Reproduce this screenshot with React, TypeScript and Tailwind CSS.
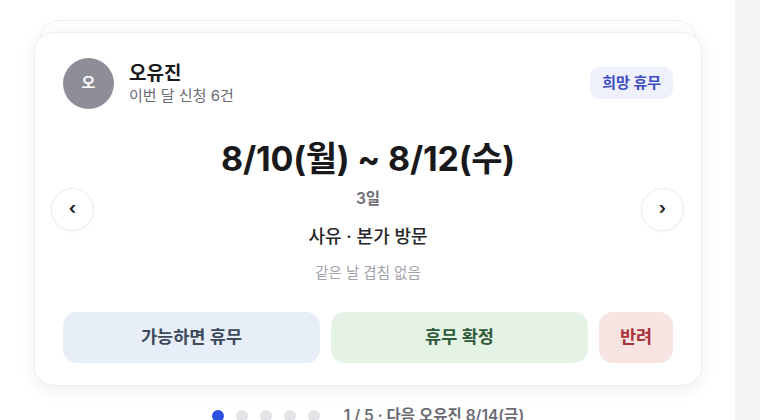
import React from "react";

const font = { fontFamily: 'Inter, "Noto Sans CJK KR", "Noto Sans", sans-serif' };

function NavButton({ side }: { side: "left" | "right" }) {
  return (
    <button
      className={`absolute top-[155px] flex h-[43px] w-[43px] items-center justify-center rounded-full border border-[#ececef] bg-white text-[17px] font-bold leading-none text-[#222] shadow-[0_1px_3px_rgba(0,0,0,0.04)] ${
        side === "left" ? "left-[16px]" : "right-[17px]"
      }`}
    >
      <span className="-mt-[2px]">{side === "left" ? "‹" : "›"}</span>
    </button>
  );
}

export default function App() {
  const dots = [0, 1, 2, 3, 4];
  return (
    <div className="flex h-[420px] w-[760px] overflow-hidden bg-white" style={font}>
      <div className="flex w-[735px] flex-col pl-[34px] pr-[33px] pt-[32px]">
        <div className="relative">
          {/* card stacked behind the current one */}
          <div className="absolute inset-x-[6px] -top-[12px] h-[60px] rounded-[20px] border border-[#f0f0f2] bg-white shadow-[0_2px_10px_rgba(0,0,0,0.03)]" />
          <div className="relative flex h-[354px] flex-col rounded-[20px] border border-[#efeff1] bg-white px-[28px] pb-[24px] pt-[25px] shadow-[0_4px_18px_rgba(0,0,0,0.07)]">
            <div className="flex items-center justify-between">
              <div className="flex items-center gap-[15px]">
                <div className="flex h-[51px] w-[51px] items-center justify-center rounded-full bg-[#8e8e99] text-[15px] font-bold text-white">
                  오
                </div>
                <div className="flex flex-col">
                  <span className="text-[19px] font-bold leading-[24px] text-[#1a1a1c]">오유진</span>
                  <span className="text-[15px] leading-[20px] text-[#6b6b73]">이번 달 신청 6건</span>
                </div>
              </div>
              <span className="-mt-[2px] rounded-[10px] bg-[#eef0fb] px-[12px] py-[6px] text-[15px] font-bold leading-[20px] text-[#3a4cc4]">
                희망 휴무
              </span>
            </div>

            <div className="mt-[30px] text-center text-[34px] font-bold leading-[40px] tracking-[-0.2px] text-[#19191b]">
              8/10(월) ~ 8/12(수)
            </div>
            <div className="mt-[9px] text-center text-[15.5px] font-semibold leading-[22px] text-[#6e6e76]">3일</div>
            <div className="mt-[14px] text-center text-[18px] font-medium leading-[26px] text-[#26262a]">
              사유 · 본가 방문
            </div>
            <div className="mt-[13px] text-center text-[14.5px] leading-[20px] text-[#a2a2aa]">같은 날 겹침 없음</div>

            <div className="mt-[29px] flex gap-[11px]">
              <button className="h-[51px] flex-1 rounded-[14px] bg-[#e8eef7] text-[17.5px] font-semibold text-[#3d4a5c]">
                가능하면 휴무
              </button>
              <button className="h-[51px] flex-1 rounded-[14px] bg-[#e5f2e6] text-[17.5px] font-semibold text-[#2f5a3a]">
                휴무 확정
              </button>
              <button className="h-[51px] w-[74px] rounded-[14px] bg-[#f8e3e3] text-[17.5px] font-semibold text-[#a8323a]">
                반려
              </button>
            </div>

            <NavButton side="left" />
            <NavButton side="right" />
          </div>
        </div>

        <div className="mt-[20px] flex h-[20px] items-center justify-center">
          <div className="flex gap-[12px]">
            {dots.map((d) => (
              <span
                key={d}
                className={`h-[12px] w-[12px] rounded-full ${d === 0 ? "bg-[#2c4fe0]" : "bg-[#e4e4e8]"}`}
              />
            ))}
          </div>
          <span className="ml-[24px] text-[15.5px] font-semibold leading-[20px] text-[#6b6b73]">
            1 / 5 · 다음 오유진 8/14(금)
          </span>
        </div>
      </div>
      <div className="w-[25px] bg-[#f3f3f5]" />
    </div>
  );
}
